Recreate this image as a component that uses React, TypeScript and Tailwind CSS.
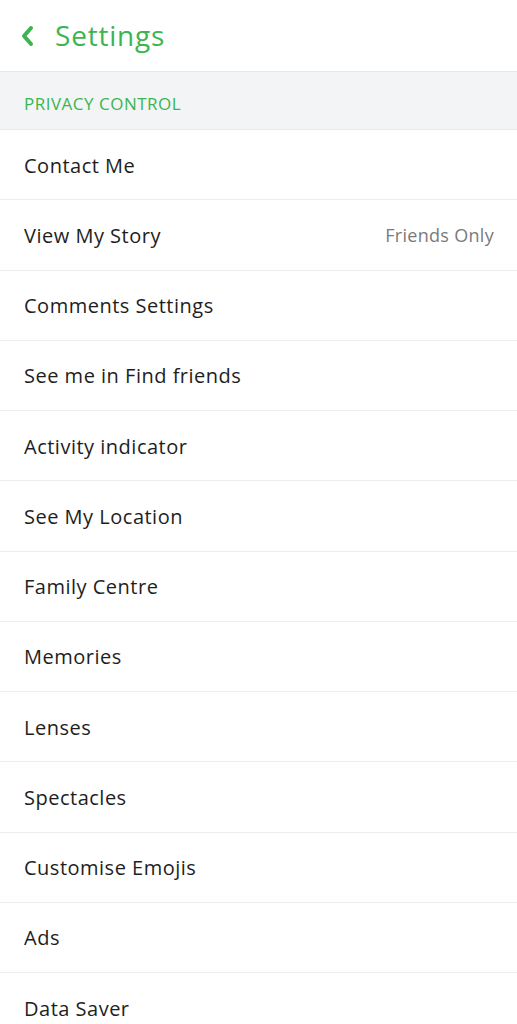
import React from "react";

const rows: { label: string; value?: string }[] = [
  { label: "Contact Me" },
  { label: "View My Story", value: "Friends Only" },
  { label: "Comments Settings" },
  { label: "See me in Find friends" },
  { label: "Activity indicator" },
  { label: "See My Location" },
  { label: "Family Centre" },
  { label: "Memories" },
  { label: "Lenses" },
  { label: "Spectacles" },
  { label: "Customise Emojis" },
  { label: "Ads" },
  { label: "Data Saver" },
];

export default function App() {
  return (
    <div
      className="w-[517px] h-[1024px] overflow-hidden bg-white"
      style={{ fontFamily: '"Open Sans", "Liberation Sans", sans-serif' }}
    >
      <div className="h-[72px] flex items-center border-b border-[#e6e6e6]">
        <svg width="14" height="22" viewBox="0 0 14 22" className="ml-[20px] mr-[21px]">
          <path d="M11 3 L4 11 L11 19" fill="none" stroke="#3cb451" strokeWidth="4" strokeLinecap="round" strokeLinejoin="round" />
        </svg>
        <span className="text-[28px] tracking-[0.8px] text-[#3cb451] leading-none -mt-[2px]">Settings</span>
      </div>
      <div className="h-[58px] bg-[#f3f4f5] flex items-center px-[24px] border-b border-[#e9e9e9]">
        <span className="text-[17px] tracking-[0.5px] text-[#3cb451] mt-[6px]">PRIVACY CONTROL</span>
      </div>
      {rows.map((r) => (
        <div
          key={r.label}
          className="h-[70.25px] flex items-center justify-between px-[24px] border-b border-[#ececec]"
        >
          <span className="text-[20px] tracking-[0.5px] text-[#1e1e1e] mt-[2px]">{r.label}</span>
          {r.value && (
            <span className="text-[18px] tracking-[0.3px] text-[#7a7a7a] mr-[-1px] mt-[2px]">{r.value}</span>
          )}
        </div>
      ))}
    </div>
  );
}
